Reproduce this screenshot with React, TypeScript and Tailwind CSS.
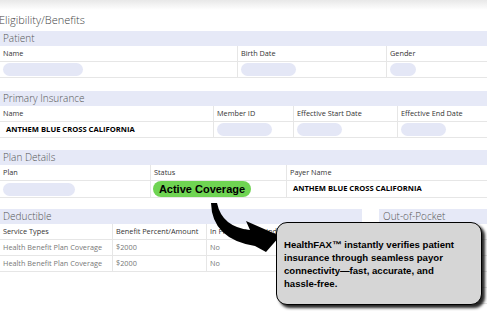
import React from 'react'

const font = { fontFamily: '"Open Sans", "Liberation Sans", sans-serif' }

function Pill({ w }: { w: number }) {
  return <div className="h-[13px] rounded-full bg-[#e4e7f6]" style={{ width: w }} />
}

function SectionHeader({ title, className = '' }: { title: string; className?: string }) {
  return (
    <div className={`h-[15px] bg-[#e6e9f7] pl-[3px] text-[10px] font-light leading-[15px] text-[#555] ${className}`}>
      {title}
    </div>
  )
}

type Cell = { w: number; node: React.ReactNode }

function Row({ cells, h = 16 }: { cells: Cell[]; h?: number }) {
  return (
    <div className="flex border-b border-[#e6e6e6]" style={{ height: h }}>
      {cells.map((c, i) => (
        <div
          key={i}
          className={`flex shrink-0 items-center overflow-hidden whitespace-nowrap px-[3px] ${i > 0 ? 'border-l border-[#e6e6e6]' : ''}`}
          style={{ width: c.w }}
        >
          {c.node}
        </div>
      ))}
    </div>
  )
}

const label = (t: string) => <span className="text-[7.3px] text-[#333]">{t}</span>
const bold = (t: string) => <span className="pl-[3px] text-[7.6px] font-bold text-black">{t}</span>
const muted = (t: string) => <span className="text-[7.3px] text-[#777]">{t}</span>

export default function App() {
  return (
    <div className="relative h-[311px] w-[487px] overflow-hidden bg-white" style={font}>
      {/* top shadow */}
      <div className="h-[10px] bg-gradient-to-b from-[#e8e8e8] to-white" />
      <div className="-ml-[1px] h-[21px] text-[11px] font-light leading-[20px] text-[#444]">Eligibility/Benefits</div>

      {/* Patient */}
      <SectionHeader title="Patient" />
      <Row cells={[{ w: 237, node: label('Name') }, { w: 149, node: label('Birth Date') }, { w: 101, node: label('Gender') }]} />
      <Row
        cells={[
          { w: 237, node: <Pill w={80} /> },
          { w: 149, node: <Pill w={55} /> },
          { w: 101, node: <Pill w={26} /> },
        ]}
      />

      {/* Primary Insurance */}
      <SectionHeader title="Primary Insurance" className="mt-[13px]" />
      <Row
        cells={[
          { w: 213, node: label('Name') },
          { w: 80, node: label('Member ID') },
          { w: 104, node: label('Effective Start Date') },
          { w: 90, node: label('Effective End Date') },
        ]}
      />
      <Row
        cells={[
          { w: 213, node: bold('ANTHEM BLUE CROSS CALIFORNIA') },
          { w: 80, node: <Pill w={55} /> },
          { w: 104, node: <Pill w={45} /> },
          { w: 90, node: <Pill w={45} /> },
        ]}
      />

      {/* Plan Details */}
      <SectionHeader title="Plan Details" className="mt-[12px]" />
      <Row cells={[{ w: 150, node: label('Plan') }, { w: 136, node: label('Status') }, { w: 201, node: label('Payer Name') }]} />
      <Row
        h={17}
        cells={[
          { w: 150, node: <Pill w={72} /> },
          {
            w: 136,
            node: (
              <span
                className="ml-[-1px] flex h-[16px] w-[98px] items-center justify-center rounded-full bg-[#6fd452] text-[11px] font-bold text-black"
                style={{ fontFamily: '"Liberation Sans", Arial, sans-serif' }}
              >
                Active Coverage
              </span>
            ),
          },
          { w: 201, node: bold('ANTHEM BLUE CROSS CALIFORNIA') },
        ]}
      />

      {/* Deductible + Out-of-Pocket */}
      <div className="mt-[11px] flex gap-[17px]">
        <div className="w-[362px] shrink-0">
          <SectionHeader title="Deductible" />
          <Row
            cells={[
              { w: 112, node: label('Service Types') },
              { w: 94, node: label('Benefit Percent/Amount') },
              { w: 156, node: label('In Plan Network Indicator') },
            ]}
          />
          <Row
            cells={[
              { w: 112, node: muted('Health Benefit Plan Coverage') },
              { w: 94, node: muted('$2000') },
              { w: 156, node: muted('No') },
            ]}
          />
          <Row
            cells={[
              { w: 112, node: muted('Health Benefit Plan Coverage') },
              { w: 94, node: muted('$2000') },
              { w: 156, node: muted('No') },
            ]}
          />
        </div>
        <div className="w-[108px] shrink-0">
          <SectionHeader title="Out-of-Pocket" className="pl-[4px]" />
          <Row cells={[{ w: 108, node: null }]} />
          <Row cells={[{ w: 108, node: null }]} />
          <Row cells={[{ w: 108, node: null }]} />
          <Row cells={[{ w: 108, node: null }]} />
          <Row cells={[{ w: 108, node: null }]} />
        </div>
      </div>

      {/* curved arrow */}
      <svg className="pointer-events-none absolute left-0 top-0" width="487" height="311" viewBox="0 0 487 311">
        <path
          d="M211 203 Q212 239 255 246 L266 252 L280 236 L246 221 L250 230 Q222 227 217 203 Z"
          fill="#000"
        />
      </svg>

      {/* callout */}
      <div
        className="absolute left-[276px] top-[222px] flex h-[83px] w-[206px] items-center rounded-[11px] border-[1.5px] border-black bg-[#d6d6d6] pl-[7px] pr-[4px] shadow-[3px_3px_3px_rgba(0,0,0,0.85)]"
        style={{ fontFamily: '"Liberation Sans", Arial, sans-serif' }}
      >
        <p className="whitespace-nowrap text-[9.6px] font-bold leading-[13px] text-black">
          HealthFAX™ instantly verifies patient
          <br />
          insurance through seamless payor
          <br />
          connectivity—fast, accurate, and
          <br />
          hassle-free.
        </p>
      </div>
    </div>
  )
}
